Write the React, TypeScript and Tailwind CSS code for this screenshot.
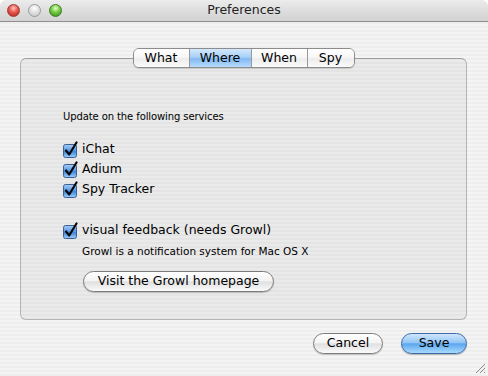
import React from "react";

const tabs = [
  { label: "What", w: "w-[55px]" },
  { label: "Where", w: "w-[62px]", active: true },
  { label: "When", w: "w-[56px]" },
  { label: "Spy", w: "w-[47px]" },
];

function CheckBox() {
  return (
    <svg width="16" height="17" viewBox="0 0 16 17" className="shrink-0">
      <defs>
        <linearGradient id="cbg" x1="0" y1="0" x2="0" y2="1">
          <stop offset="0" stopColor="#a9cdf5" />
          <stop offset="0.45" stopColor="#5b9ce6" />
          <stop offset="0.55" stopColor="#3f86dc" />
          <stop offset="1" stopColor="#9fd0fb" />
        </linearGradient>
      </defs>
      <rect x="0.5" y="3.5" width="13" height="13" rx="2" fill="url(#cbg)" stroke="#3b5f92" />
      <path d="M3 9.5 L6.2 13.5 L13.5 1.5" fill="none" stroke="#0a0a0a" strokeWidth="2.2" strokeLinecap="round" strokeLinejoin="round" />
    </svg>
  );
}

function CheckRow({ label }: { label: string }) {
  return (
    <div className="flex items-center h-[20px]">
      <CheckBox />
      <span className="ml-[3px] text-[12.5px] text-black leading-none">{label}</span>
    </div>
  );
}

export default function App() {
  return (
    <div className="w-[488px] h-[376px] bg-white font-['DejaVu_Sans',sans-serif]">
      <div className="w-full h-full flex flex-col rounded-t-[6px] overflow-hidden relative">
        {/* Title bar */}
        <div className="h-[22px] shrink-0 flex items-center relative border-b border-[#8f8f8f] bg-[linear-gradient(#ececec,#dedede_50%,#d2d2d2)]">
          <div className="flex items-center gap-[8px] pl-[7px]">
            <div className="w-[13px] h-[13px] rounded-full border border-[#9b3a36] bg-[radial-gradient(circle_at_50%_30%,#ffc4bd_0%,#e5564c_45%,#b11d14_100%)]" />
            <div className="w-[13px] h-[13px] rounded-full border border-[#9a9a9a] bg-[radial-gradient(circle_at_50%_30%,#ffffff_0%,#e2e2e2_45%,#c2c2c2_100%)]" />
            <div className="w-[13px] h-[13px] rounded-full border border-[#3f7d25] bg-[radial-gradient(circle_at_50%_30%,#e2ffc8_0%,#74c943_45%,#2f8a12_100%)]" />
          </div>
          <div className="flex-1 text-center text-[12.5px] text-[#222] pr-[62px]">Preferences</div>
        </div>

        {/* Body */}
        <div className="flex-1 flex flex-col px-[20px] pt-[26px] bg-[repeating-linear-gradient(0deg,#eeeeee_0px,#eeeeee_2px,#f4f4f4_2px,#f4f4f4_4px)]">
          <div className="relative z-10 flex justify-center h-[20px] w-[447px]">
            <div className="flex rounded-[6px] border border-[#8c8c8c] overflow-hidden shadow-[0_1px_1px_rgba(0,0,0,0.15)]">
              {tabs.map((t, i) => (
                <div
                  key={t.label}
                  className={`${t.w} flex items-center justify-center text-[12.5px] text-black ${
                    i > 0 ? "border-l border-[#9a9a9a]" : ""
                  } ${
                    t.active
                      ? "bg-[linear-gradient(#d3e8fc,#a8d0f7_45%,#82b9f0_55%,#b8dcff)]"
                      : "bg-[linear-gradient(#ffffff,#f7f7f7_45%,#ececec_55%,#fbfbfb)]"
                  }`}
                >
                  {t.label}
                </div>
              ))}
            </div>
          </div>

          <div className="mt-[-10px] w-[447px] h-[262px] rounded-[6px] border border-[#b4b4b4] border-t-[#9d9d9d] bg-[rgba(0,0,0,0.04)] pl-[42px] pt-[51px] flex flex-col">
            <div className="text-[10px] leading-[14px] text-black tracking-[-0.1px]">Update on the following services</div>
            <div className="mt-[15px] flex flex-col">
              <CheckRow label="iChat" />
              <CheckRow label="Adium" />
              <CheckRow label="Spy Tracker" />
            </div>
            <div className="mt-[21px]">
              <CheckRow label="visual feedback (needs Growl)" />
            </div>
            <div className="mt-[4px] pl-[19px] text-[10.5px] leading-[14px] text-black">
              Growl is a notification system for Mac OS X
            </div>
            <div className="mt-[10px] pl-[20px]">
              <button className="w-[191px] h-[21px] rounded-full border border-[#7c7c7c] text-[12.5px] text-black bg-[linear-gradient(#ffffff,#f4f4f4_45%,#e0e0e0_52%,#fafafa)] shadow-[0_1px_1px_rgba(0,0,0,0.2)]">
                Visit the Growl homepage
              </button>
            </div>
          </div>

          <div className="mt-[13px] w-[447px] flex justify-end gap-[18px]">
            <button className="w-[70px] h-[21px] rounded-full border border-[#7c7c7c] text-[12.5px] text-black bg-[linear-gradient(#ffffff,#f4f4f4_45%,#e0e0e0_52%,#fafafa)] shadow-[0_1px_1px_rgba(0,0,0,0.2)]">
              Cancel
            </button>
            <button className="w-[66px] h-[21px] rounded-full border border-[#3f6aa6] text-[12.5px] text-black bg-[linear-gradient(#cfe6fd,#94c6f6_45%,#5ba6ee_52%,#a9dafe)] shadow-[0_1px_1px_rgba(0,0,0,0.25)]">
              Save
            </button>
          </div>
        </div>

        {/* Resize grip */}
        <svg width="12" height="12" viewBox="0 0 12 12" className="absolute right-[2px] bottom-[2px]">
          <path d="M11 2 L2 11 M11 6 L6 11 M11 10 L10 11" stroke="#8a8a8a" strokeWidth="1" />
        </svg>
      </div>
    </div>
  );
}
